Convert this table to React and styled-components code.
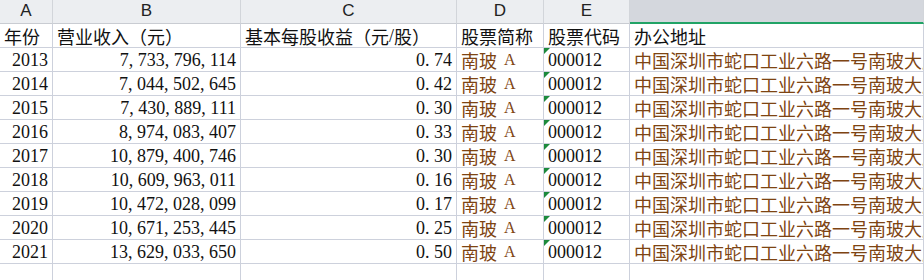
import styled, { createGlobalStyle } from "styled-components";

const GlobalStyle = createGlobalStyle`
  html, body {
    margin: 0;
    padding: 0;
    background: #ffffff;
    overflow: hidden;
  }
`;

const columns = [
  { key: "A", width: "53px" },
  { key: "B", width: "188px" },
  { key: "C", width: "216px" },
  { key: "D", width: "87px" },
  { key: "E", width: "86px" },
  { key: "F", width: "1fr", selected: true, hidden: true },
];

const rows = [
  ["2013", "7, 733, 796, 114", "0. 74"],
  ["2014", "7, 044, 502, 645", "0. 42"],
  ["2015", "7, 430, 889, 111", "0. 30"],
  ["2016", "8, 974, 083, 407", "0. 33"],
  ["2017", "10, 879, 400, 746", "0. 30"],
  ["2018", "10, 609, 963, 011", "0. 16"],
  ["2019", "10, 472, 028, 099", "0. 17"],
  ["2020", "10, 671, 253, 445", "0. 25"],
  ["2021", "13, 629, 033, 650", "0. 50"],
];

const address = "中国深圳市蛇口工业六路一号南玻大厦";

export default function App() {
  return (
    <>
      <GlobalStyle />
      <Sheet>
        {columns.map((c) => (
          <ColHead key={c.key} $selected={c.selected}>
            {c.hidden ? "" : c.key}
          </ColHead>
        ))}

        <Cell>年份</Cell>
        <Cell>营业收入（元）</Cell>
        <Cell>
          基本每股收益（元<Num>/</Num>股）
        </Cell>
        <Cell>股票简称</Cell>
        <Cell>股票代码</Cell>
        <Cell>办公地址</Cell>

        {rows.map(([year, revenue, eps]) => (
          <Row key={year}>
            <Cell $align="right">
              <Num>{year}</Num>
            </Cell>
            <Cell $align="right">
              <Num>{revenue}</Num>
            </Cell>
            <Cell $align="right">
              <Num>{eps}</Num>
            </Cell>
            <Cell $brown>
              南玻<Num $small> A</Num>
            </Cell>
            <Cell>
              <Flag />
              <Num>000012</Num>
            </Cell>
            <Cell $brown>{address}</Cell>
          </Row>
        ))}

        <Row>
          {columns.map((c) => (
            <Cell key={c.key} />
          ))}
        </Row>
      </Sheet>
    </>
  );
}

const Sheet = styled.div`
  display: grid;
  grid-template-columns: ${columns.map((c) => c.width).join(" ")};
  grid-auto-rows: 24px;
  width: 924px;
  height: 280px;
  overflow: hidden;
`;

const Row = styled.div`
  display: contents;
`;

const ColHead = styled.div`
  box-sizing: border-box;
  display: flex;
  align-items: center;
  justify-content: center;
  padding-bottom: 1px;
  background: ${(p) => (p.$selected ? "#d4d7dd" : "#eceef1")};
  border-right: 1px solid #d2d5da;
  border-bottom: ${(p) => (p.$selected ? "2px solid #21a366" : "1px solid #c9ccd2")};
  font-family: "Liberation Sans", Arial, sans-serif;
  font-size: 17px;
  color: #222222;
`;

const Cell = styled.div`
  position: relative;
  box-sizing: border-box;
  display: flex;
  align-items: center;
  justify-content: ${(p) => (p.$align === "right" ? "flex-end" : "flex-start")};
  padding: 1px 4px 0 4px;
  border-right: 1px solid #cdd1dc;
  border-bottom: 1px solid #cdd1dc;
  font-family: "Noto Sans CJK SC", sans-serif;
  font-size: 18px;
  line-height: 22px;
  color: ${(p) => (p.$brown ? "#7e4412" : "#111111")};
  white-space: nowrap;
  overflow: hidden;
`;

const Num = styled.span`
  font-family: "Liberation Serif", "Times New Roman", serif;
  font-size: ${(p) => (p.$small ? "16px" : "18px")};
  white-space: pre;
  ${(p) => (p.$small ? "margin-left: 4px;" : "")}
`;

const Flag = styled.span`
  position: absolute;
  top: 0;
  left: 0;
  width: 0;
  height: 0;
  border-top: 6px solid #1c8a3c;
  border-right: 6px solid transparent;
`;
